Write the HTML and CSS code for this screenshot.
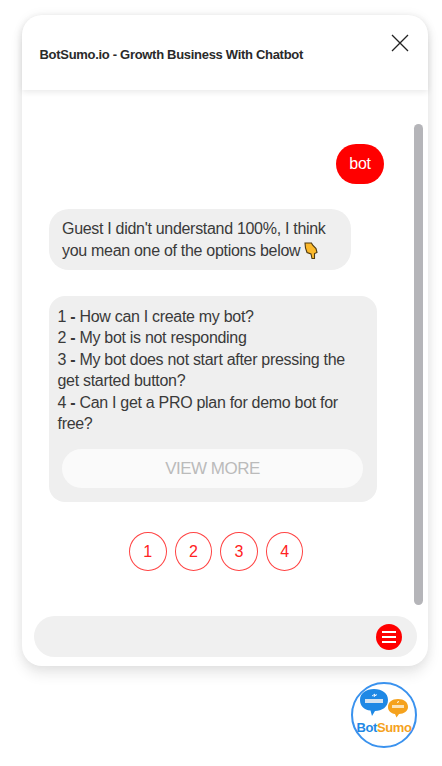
FILE: index.html
```html
<!DOCTYPE html>
<html lang="en">
<head>
<meta charset="utf-8">
<title>BotSumo chat</title>
<link rel="stylesheet" href="styles.css">
</head>
<body>
<div class="page">
  <section class="card">
    <header class="head">
      <h1 class="title">BotSumo.io - Growth Business With Chatbot</h1>
      <button class="close" aria-label="Close">
        <svg width="18" height="18" viewBox="0 0 18 18"><path d="M1 1L17 17M17 1L1 17" stroke="#222" stroke-width="1.3" fill="none"/></svg>
      </button>
    </header>
    <div class="body">
      <div class="messages">
        <div class="bubble-user">bot</div>
        <div class="bubble guest">Guest I didn't understand 100%, I think you mean one of the options below <svg class="hand" width="14" height="18" viewBox="0 0 14 18"><path d="M1 1H7.500L8.500 3L12 6.500L13 10.500L10.500 11.500V16.500H8L7 12L3 10.500L1.500 6Z" fill="#fbb92c" stroke="#4f3a10" stroke-width="1.1" stroke-linejoin="miter"/></svg></div>
        <div class="bubble options">
          <p class="line">1 <b class="dash">-</b> How can I create my bot?</p>
          <p class="line">2 <b class="dash">-</b> My bot is not responding</p>
          <p class="line">3 <b class="dash">-</b> My bot does not start after pressing the<br>get started button?</p>
          <p class="line">4 <b class="dash">-</b> Can I get a PRO plan for demo bot for<br>free?</p>
          <button class="more">VIEW MORE</button>
        </div>
        <div class="replies">
          <button class="reply">1</button>
          <button class="reply">2</button>
          <button class="reply">3</button>
          <button class="reply">4</button>
        </div>
      </div>
      <div class="thumb"></div>
    </div>
    <div class="composer">
      <button class="menu" aria-label="Menu"><span></span><span></span><span></span></button>
    </div>
  </section>
  <div class="logo-row">
    <div class="logo">
      <svg class="logo-art" width="54" height="33" viewBox="0 0 54 33">
        <path d="M3 11C3 4 9 0 17 0C25 0 31 4 31 11C31 18 25 22 18 22L15 27L13.500 21.500C7 21 3 17 3 11Z" fill="#1e88e5"/>
        <path d="M31 18C31 13 35 10 41 10C47 10 51 13 51 18C51 22 47 25 42 25L39.500 28.500L38 25C34 24.500 31 22 31 18Z" fill="#f5a21d"/>
        <rect x="8" y="10" width="18" height="4" fill="#d5e3f0"/>
        <rect x="35" y="16" width="12" height="3" fill="#fbe3b8"/>
        <path d="M15 7L18 5L17 7.500L20 5.500" stroke="#fff" stroke-width="0.9" fill="none"/>
        <path d="M40 13.500L42 12.500" stroke="#fff" stroke-width="1"/>
      </svg>
      <div class="logo-text"><span class="logo-bot">Bot</span><span class="logo-sumo">Sumo</span></div>
    </div>
  </div>
</div>
</body>
</html>
```
FILE: styles.css
```css
* { box-sizing: border-box; }
html, body { margin: 0; padding: 0; background: #fff; }
body { font-family: "Liberation Sans", Arial, sans-serif; color: #3a3a3a; }
button { font-family: inherit; border: 0; padding: 0; background: none; cursor: pointer; }

.page { width: 442px; height: 766px; padding: 15px 14px 0 22px; overflow: hidden; }

.card {
  width: 406px;
  height: 651px;
  background: #fff;
  border-radius: 20px;
  box-shadow: 0 8px 14px rgba(0, 0, 0, 0.09), 0 0 12px rgba(0, 0, 0, 0.06);
  display: flex;
  flex-direction: column;
}

.head {
  height: 75px;
  flex: none;
  padding: 0 19px 0 17.500px;
  display: flex;
  justify-content: space-between;
  border-radius: 20px 20px 0 0;
  box-shadow: 0 2px 6px rgba(0, 0, 0, 0.09);
}
.title { margin: 32px 0 0; font-size: 13px; letter-spacing: -0.3px; line-height: 15px; font-weight: 700; color: #2a2a2a; }
.close { width: 18px; height: 18px; margin-top: 19px; display: block; }
.close svg { display: block; }

.body { flex: none; height: 526px; display: flex; padding-right: 5px; }
.messages { width: 392px; padding: 54px 0 0 27px; display: flex; flex-direction: column; align-items: flex-start; }

.bubble-user {
  align-self: flex-end;
  width: 48px;
  height: 40px;
  margin-right: 30px;
  background: #f00;
  color: #fff;
  border-radius: 20px;
  font-size: 16px;
  letter-spacing: -0.3px;
  line-height: 40px;
  text-align: center;
}
.bubble { background: #efefef; font-size: 16px; letter-spacing: -0.3px; line-height: 21.6px; }
.guest { width: 302px; margin-top: 25px; padding: 9px 13px 0; height: 61px; border-radius: 20px; }
.hand { vertical-align: -4px; }
.options { width: 328px; height: 206px; margin-top: 26px; padding: 9.500px 8px 0 8.500px; border-radius: 16px; }
.line { margin: 0; }
.dash { font-weight: 700; }
.more {
  display: block;
  width: 301px;
  height: 39px;
  margin: 13.9px 0 0 4.500px;
  padding-top: 2px;
  background: #fafafa;
  border-radius: 20px;
  color: #bbb;
  font-size: 17px;
  letter-spacing: -0.5px;
}
.replies { display: flex; gap: 8px; margin: 30px 0 0 80px; }
.reply {
  width: 37.6px;
  height: 39px;
  border: 1px solid #f44;
  border-radius: 50%;
  color: #f22;
  font-size: 16px;
}

.thumb { width: 9px; height: 481px; margin-top: 34px; background: #b5b5b9; border-radius: 5px; }

.composer {
  width: 383px;
  height: 41px;
  margin: 0 0 0 12px;
  background: #f0f0f0;
  border-radius: 21px;
  display: flex;
  justify-content: flex-end;
  align-items: center;
  padding-right: 15px;
}
.menu {
  width: 26px;
  height: 26px;
  background: #f00;
  border-radius: 50%;
  display: flex;
  flex-direction: column;
  justify-content: center;
  align-items: center;
  gap: 3px;
}
.menu span { display: block; width: 14px; height: 2px; background: #fff; }

.logo-row { display: flex; justify-content: flex-end; margin-top: 16px; padding-right: 11px; }
.logo {
  width: 66px;
  height: 66px;
  border: 2px solid #3a92ee;
  border-radius: 50%;
  background: #fff;
  display: flex;
  flex-direction: column;
  align-items: center;
  padding-top: 5px;
}
.logo-art { display: block; flex: none; }
.logo-text { font-size: 13px; letter-spacing: -0.4px; line-height: 13px; font-weight: 700; margin-top: -1px; }
.logo-bot { color: #1e88e5; }
.logo-sumo { color: #f5a21d; }
```
